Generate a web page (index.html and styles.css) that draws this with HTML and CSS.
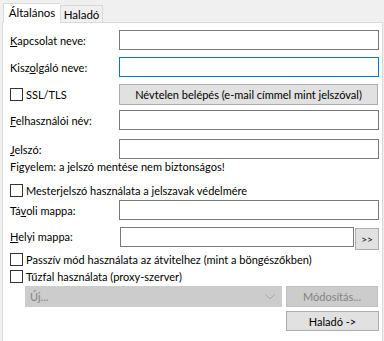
FILE: index.html
```html
<!DOCTYPE html>
<html lang="hu">
<head>
    <meta charset="UTF-8">
    <title>Kapcsolat beállításai</title>
    <link rel="stylesheet" href="styles.css">
</head>
<body>
    <div class="tabs">
        <div class="tab active">Általános</div>
        <div class="tab">Haladó</div>
    </div>

    <div class="panel">
        <div class="row r1">
            <label class="label"><u>K</u>apcsolat neve:</label>
            <div class="field"></div>
        </div>
        <div class="row r2">
            <label class="label">Kisz<u>o</u>lgáló neve:</label>
            <div class="field focused"></div>
        </div>
        <div class="row r3">
            <label class="check"><span class="box"></span>SSL/TLS</label>
            <button class="btn wide">Névtelen belépés (e-mail címmel mint jelszóval)</button>
        </div>
        <div class="row r4">
            <label class="label"><u>F</u>elhasználói név:</label>
            <div class="field"></div>
        </div>
        <div class="row r5">
            <label class="label"><u>J</u>elszó:</label>
            <div class="field"></div>
        </div>
        <div class="row r6 note">Figyelem: a jelszó mentése nem biztonságos!</div>
        <div class="row r7">
            <label class="check"><span class="box"></span>Mesterjelszó használata a jelszavak védelmére</label>
        </div>
        <div class="row r8">
            <label class="label">Tá<u>v</u>oli mappa:</label>
            <div class="field"></div>
        </div>
        <div class="row r9">
            <label class="label"><u>H</u>elyi mappa:</label>
            <div class="field local"></div>
            <button class="btn browse">&gt;&gt;</button>
        </div>
        <div class="row r10">
            <label class="check"><span class="box"></span>Passzív mód használata az átvitelhez (mint a böngészőkben)</label>
        </div>
        <div class="row r11">
            <label class="check"><span class="box"></span>Tűzfal használata (proxy-szerver)</label>
        </div>
        <div class="row r12">
            <div class="combo">
                <span>Új...</span>
                <svg class="arrow" width="10" height="6" viewBox="0 0 10 6">
                    <path d="M0.5 0.5 L5 5 L9.5 0.5" fill="none" stroke="#a6a6a6" stroke-width="1"/>
                </svg>
            </div>
            <button class="btn disabled modify">Módosítás...</button>
        </div>
        <div class="row r13">
            <button class="btn advanced">Haladó -&gt;</button>
        </div>
    </div>
</body>
</html>
```

FILE: styles.css
```css
* {
    margin: 0;
    padding: 0;
    box-sizing: border-box;
}

html, body {
    height: 341px;
    overflow: hidden;
}

body {
    background-color: #f0f0f0;
    font-family: Lato, 'Liberation Sans', Arial, sans-serif;
    font-size: 11px;
    color: #000;
}

u {
    text-decoration: underline;
    text-underline-offset: 1px;
}

/* Tabs */
.tabs {
    display: flex;
    align-items: flex-end;
    height: 23px;
    padding-left: 3px;
    position: relative;
    z-index: 1;
}

.tab {
    width: 43px;
    height: 17px;
    border: 1px solid #d9d9d9;
    border-bottom: none;
    background-color: #f0f0f0;
    line-height: 17px;
    margin-bottom: 1px;
    font-size: 11.5px;
    text-align: center;
}

.tab.active {
    width: 57px;
    height: 20px;
    background-color: #fff;
    margin-bottom: 0;
    line-height: 18px;
    border-right: none;
}

/* Panel */
.panel {
    margin: -1px 1px 0 2px;
    height: 400px;
    background-color: #fff;
    border: 1px solid #d9d9d9;
    border-bottom: none;
    padding: 0 3px 0 7px;
    display: flex;
    flex-direction: column;
}

.row {
    display: flex;
    align-items: center;
}

.r1  { margin-top: 7px;  height: 20px; }
.r2  { margin-top: 7px;  height: 20px; }
.r3  { margin-top: 7px;  height: 21px; }
.r4  { margin-top: 5px;  height: 20px; }
.r5  { margin-top: 9px;  height: 20px; }
.r6  { margin-top: 1px;  height: 13px; }
.r7  { margin-top: 9px;  height: 16px; }
.r8  { margin-top: 2px;  height: 20px; }
.r9  { margin-top: 7px;  height: 22px; align-items: flex-start; }
.r10 { margin-top: 4px;  height: 13px; }
.r11 { margin-top: 4px;  height: 13px; }
.r12 { margin-top: 3px;  height: 21px; }
.r13 { margin-top: 4px;  height: 20px; justify-content: flex-end; }

.r9 .label {
    line-height: 20px;
}

.label {
    width: 109px;
    flex-shrink: 0;
}

.field {
    flex-grow: 1;
    height: 20px;
    border: 1px solid #7a7a7a;
    background-color: #fff;
}

.field.focused {
    border-color: #0078d7;
}

.field.local {
    margin-left: 1px;
    flex-grow: 0;
    width: 234px;
}

/* Checkboxes */
.check {
    display: flex;
    align-items: center;
    white-space: nowrap;
}

.box {
    width: 13px;
    height: 13px;
    border: 1px solid #333;
    background-color: #fff;
    margin-right: 3px;
}

.r3 .check {
    width: 109px;
}

/* Buttons */
.btn {
    font-family: inherit;
    font-size: 11px;
    color: #000;
    background-color: #e1e1e1;
    border: 1px solid #adadad;
    height: 20px;
    white-space: nowrap;
}

.btn.wide {
    flex-grow: 1;
    height: 21px;
    margin-right: 1px;
}

.btn.browse {
    width: 24px;
    height: 22px;
    margin-left: 1px;
    margin-top: 1px;
    font-size: 10px;
}

.btn.disabled {
    background-color: #cccccc;
    border-color: #bfbfbf;
    color: #838383;
}

.btn.modify {
    width: 92px;
    height: 21px;
    margin-left: 4px;
}

.btn.advanced {
    width: 93px;
}

/* Disabled combobox */
.combo {
    margin-left: 15px;
    width: 257px;
    height: 21px;
    background-color: #cccccc;
    border: 1px solid #cccccc;
    color: #838383;
    display: flex;
    align-items: center;
    justify-content: space-between;
    padding: 0 6px 0 4px;
}

.arrow {
    display: block;
}
```
